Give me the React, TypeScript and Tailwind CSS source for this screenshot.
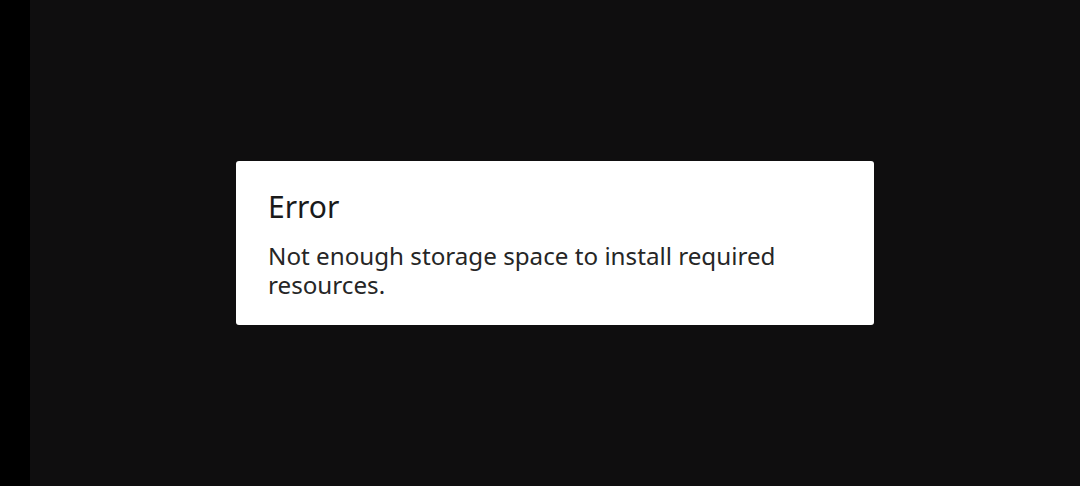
const App = () => {
  return (
    <div className="flex h-[486px] w-[1080px] bg-black" style={{ fontFamily: '"Noto Sans", sans-serif' }}>
      <div className="w-[30px] shrink-0 bg-black" />
      <div className="flex flex-1 items-start bg-[#0f0e0f] pl-[206px] pt-[161px]">
        <div className="flex h-[164px] w-[638px] flex-col rounded-[3px] bg-white px-8 pt-[26px]">
          <h1 className="text-[30px] leading-[40px] text-[#1a1a1a]">Error</h1>
          <p className="mt-[14px] text-[24.2px] leading-[29px] text-[#262626]">
            Not enough storage space to install required resources.
          </p>
        </div>
      </div>
    </div>
  );
};

export default App;
